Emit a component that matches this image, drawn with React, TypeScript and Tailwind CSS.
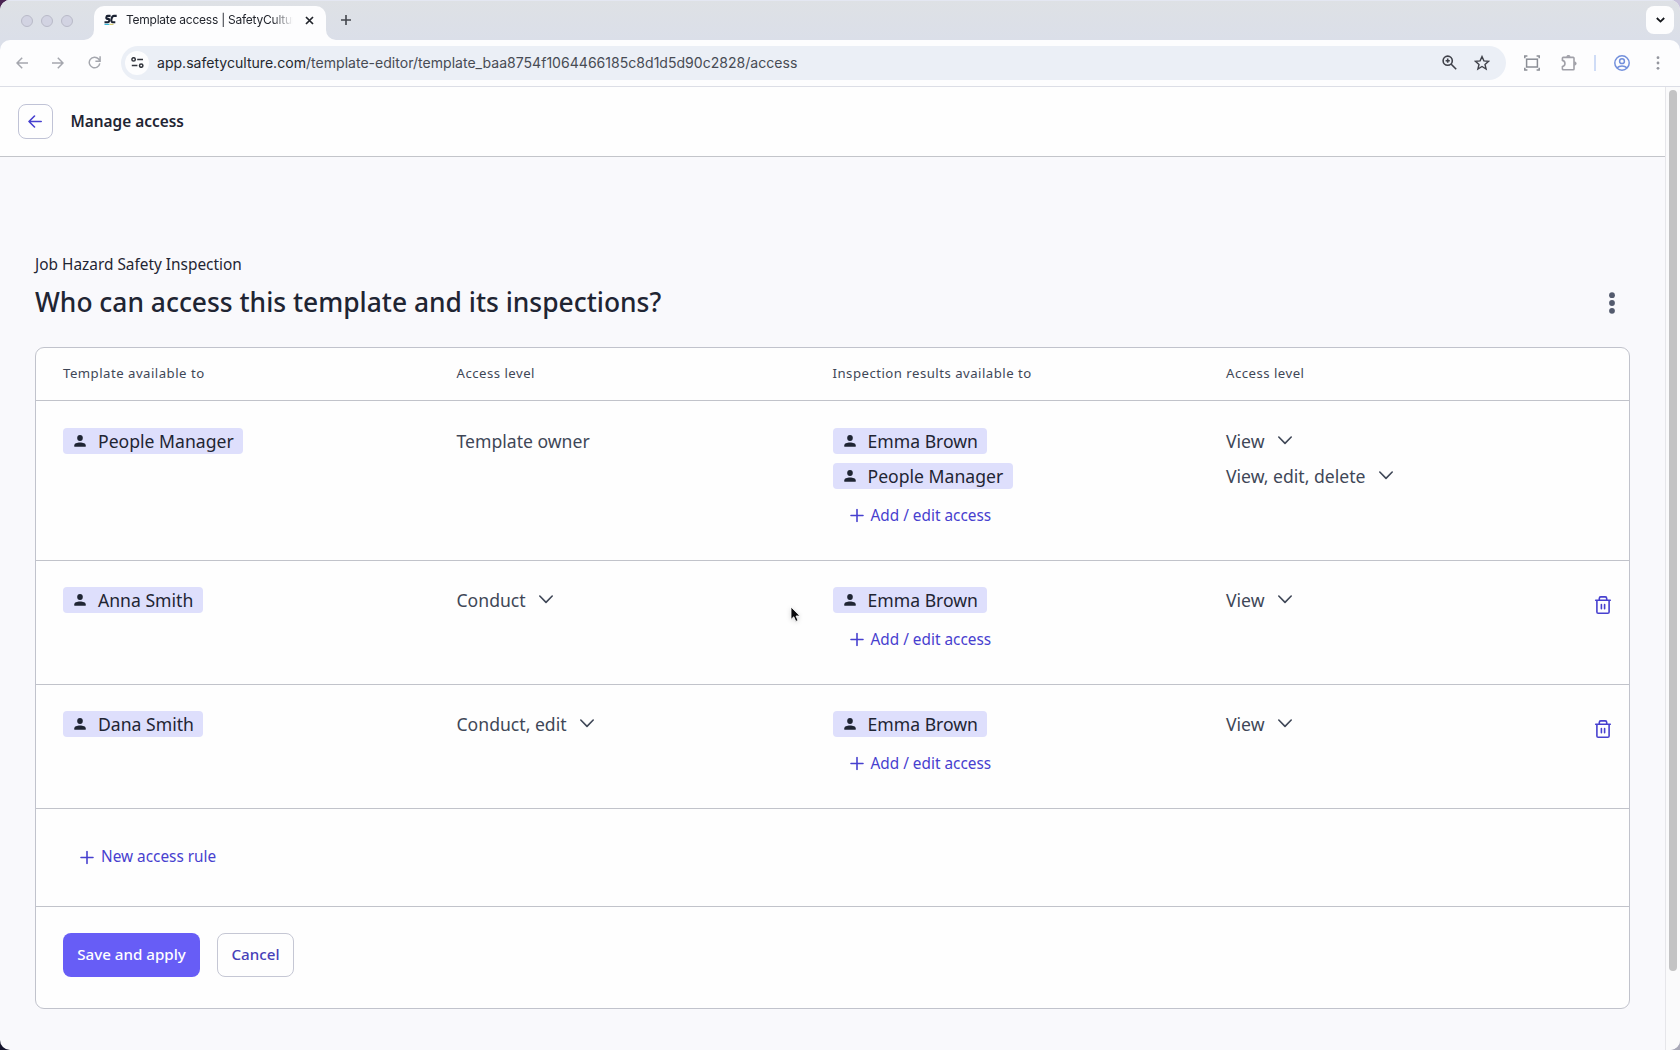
import React from 'react';

type Grant = { name: string; level: string };
type Rule = {
  name: string;
  level: string;
  owner?: boolean;
  results: Grant[];
};

const rules: Rule[] = [
  {
    name: 'People Manager',
    level: 'Template owner',
    owner: true,
    results: [
      { name: 'Emma Brown', level: 'View' },
      { name: 'People Manager', level: 'View, edit, delete' },
    ],
  },
  { name: 'Anna Smith', level: 'Conduct', results: [{ name: 'Emma Brown', level: 'View' }] },
  { name: 'Dana Smith', level: 'Conduct, edit', results: [{ name: 'Emma Brown', level: 'View' }] },
];

function Chip({ name }: { name: string }) {
  return (
    <div className="flex h-[26px] w-fit items-center rounded-[4px] bg-[#dedffc] pr-[9.5px] pl-[11px] text-[17.6px] text-[#1f2533]">
      <svg className="mr-3 size-3" viewBox="0 0 12 12" fill="currentColor">
        <ellipse cx="6" cy="3" rx="2.8" ry="3" />
        <path d="M0.3 11.8V10.2C0.3 8.4 2.9 7.4 6 7.4s5.7 1 5.7 2.8v1.6z" />
      </svg>
      <span className="whitespace-nowrap">{name}</span>
    </div>
  );
}

function Level({ label, menu = true }: { label: string; menu?: boolean }) {
  return (
    <div className="flex h-[26px] items-center text-[17.6px] text-[#3f4757]">
      <span className="whitespace-nowrap">{label}</span>
      {menu && (
        <svg className="ml-[12.5px] h-[9px] w-4 -translate-y-px" viewBox="0 0 16 9" fill="none" stroke="currentColor" strokeWidth="1.6" strokeLinecap="round" strokeLinejoin="round">
          <path d="M1.8 1L8 7.4L14.2 1" />
        </svg>
      )}
    </div>
  );
}

function AddLink({ label }: { label: string }) {
  return (
    <div className="flex items-center pl-[17px] text-[15.35px] font-[450] text-[#4740cf]">
      <svg className="mr-[7px] size-[14px] translate-y-[0.5px]" viewBox="0 0 14 14" fill="none" stroke="currentColor" strokeWidth="1.6" strokeLinecap="round">
        <path d="M7 1v12M1 7h12" />
      </svg>
      <span className="whitespace-nowrap">{label}</span>
    </div>
  );
}

function Trash() {
  return (
    <svg className="mt-[8px] h-[20px] w-[18px] text-[#4740cf]" viewBox="0 0 18 20" fill="none" stroke="currentColor" strokeWidth="1.6" strokeLinecap="round" strokeLinejoin="round">
      <path d="M1.7 5.2h14.6M5.3 5V3.4c0-.9.6-1.5 1.5-1.5h4.4c.9 0 1.5.6 1.5 1.5V5M2.9 5.2v11.7c0 .8.5 1.3 1.3 1.3h9.6c.8 0 1.3-.5 1.3-1.3V5.2M7.4 9.6v4.2M10.6 9.6v4.2" />
    </svg>
  );
}

const cols = 'grid grid-cols-[393.5px_376px_393.5px_1fr]';

function BrowserBar() {
  return (
    <div className="shrink-0 font-['Inter',sans-serif]">
      <div className="h-10 bg-linear-to-b from-[#dee1e5] to-[#dbdfe9]">
        <div className="flex h-10 border-t border-[#e4e7f2]">
          <div className="flex items-center gap-2 pr-[20px] pl-[21px]">
            {[0, 1, 2].map((i) => (
              <span key={i} className="size-3 rounded-full border border-[#b9bac8] bg-[#d2d3e2]" />
            ))}
          </div>
          <svg className="mt-[29px] -ml-[9px] size-[10px] shrink-0" viewBox="0 0 10 10" fill="#fdfdfe">
            <path d="M10 0v10H0A10 10 0 0 0 10 0z" />
          </svg>
          <div className="mt-[5px] flex h-[34px] w-[232px] items-center rounded-t-[10px] bg-[#fdfdfe] pb-[6px] pl-[10px]">
            <svg className="h-[12px] w-[13px]" viewBox="0 0 13 12">
              <g fill="none" strokeWidth="2.1" stroke="#1b2233">
                <path d="M6.6 1.9H3.7C2.2 1.9 1.7 4.8 3.4 4.9h.8C6 5 5.5 8.3 3.6 8.3H.5" />
                <path d="M12.7 1.9H10C7.5 1.9 6.2 8.3 8.6 8.3h2.7" />
              </g>
              <path d="M.5 10.4h5" stroke="#38b6d8" strokeWidth="1.2" />
              <path d="M5.5 10.4h4" stroke="#d9cf7a" strokeWidth="1.2" />
            </svg>
            <span className="ml-[9px] w-[167px] overflow-hidden text-[12px] tracking-[-0.02em] whitespace-nowrap text-[#23262e] [mask-image:linear-gradient(to_right,black_146px,transparent_167px)]">
              Template access | SafetyCulture
            </span>
            <svg className="ml-[12px] size-[9px]" viewBox="0 0 9 9" stroke="#22252b" strokeWidth="1.7" fill="none">
              <path d="M1 1l7 7M8 1l-7 7" />
            </svg>
          </div>
          <svg className="mt-[29px] size-[10px] shrink-0" viewBox="0 0 10 10" fill="#fdfdfe">
            <path d="M0 0v10h10A10 10 0 0 1 0 0z" />
          </svg>
          <svg className="mt-[14px] ml-[5px] size-[10px]" viewBox="0 0 10 10" stroke="#43464d" strokeWidth="1.6" fill="none">
            <path d="M5 0v10M0 5h10" />
          </svg>
          <div className="mt-[5px] mr-[6px] ml-auto flex size-7 items-center justify-center rounded-[8px] bg-[#fdfdfe]">
            <svg className="h-[6px] w-[9px]" viewBox="0 0 9 6" stroke="#15171c" strokeWidth="1.8" fill="none">
              <path d="M.8 1l3.7 3.6L8.2 1" />
            </svg>
          </div>
        </div>
      </div>
      <div className="bg-[#dbdfe9]">
        <div className="flex h-[47px] items-center rounded-t-[10px] border-b border-[#dcdee6] bg-[#fdfdfe] pb-[1px]">
          <svg className="ml-[16px] h-3 w-[12px]" viewBox="0 0 12 12" fill="none" stroke="#a5a7ae" strokeWidth="1.5">
            <path d="M12 6H1.2M6.2.8L1 6l5.2 5.2" />
          </svg>
          <svg className="ml-[24px] h-3 w-[12px]" viewBox="0 0 12 12" fill="none" stroke="#a5a7ae" strokeWidth="1.5">
            <path d="M0 6h10.8M5.8.8L11 6l-5.2 5.2" />
          </svg>
          <svg className="ml-[23.5px] size-[13px]" viewBox="0 0 13 13" fill="none" stroke="#a5a7ae" strokeWidth="1.5">
            <path d="M11.8 7.4A5.3 5.3 0 1 1 10.6 3L12 4.8M12.1.3v4.9H7.4" />
          </svg>
          <div className="ml-[20.5px] flex h-[34px] w-[1385px] items-center rounded-full bg-[#ebeff6] pl-[4px]">
            <div className="flex size-6 items-center justify-center rounded-full bg-[#fdfdfe]">
              <svg className="h-[11px] w-[13px]" viewBox="0 0 13 11" fill="none" stroke="#32353c" strokeWidth="1.5">
                <circle cx="2.6" cy="2.4" r="1.7" />
                <path d="M6.2 2.4H12" />
                <circle cx="10.2" cy="8.6" r="1.7" />
                <path d="M.8 8.6h5.6" />
              </svg>
            </div>
            <span className="ml-[8px] text-[14.07px] whitespace-nowrap text-[#474b54]">
              <span className="text-[#24272e]">app.safetyculture.com</span>
              /template-editor/template_baa8754f1064466185c8d1d5d90c2828/access
            </span>
            <svg className="mr-[17px] ml-auto size-[15px]" viewBox="0 0 15 15" fill="none" stroke="#3f4149" strokeWidth="1.6">
              <circle cx="5.7" cy="5.7" r="4.6" />
              <path d="M9 9l5.2 5.2M5.7 3.6v4.2M3.6 5.7h4.2" />
            </svg>
            <svg className="mr-[16px] size-[16px]" viewBox="0 0 16 16" fill="none" stroke="#3f4149" strokeWidth="1.4">
              <path d="M8 1.6l1.9 4.3 4.7.4-3.6 3.1 1.1 4.6L8 11.5 3.9 14 5 9.4 1.4 6.3l4.7-.4z" />
            </svg>
          </div>
          <svg className="ml-[18px] size-4" viewBox="0 0 16 16" fill="none" stroke="#8a8d95" strokeWidth="1.5">
            <rect x="2.6" y="4.2" width="10.8" height="7.8" />
            <path d="M.8 3.2V.9h2.6M12.6.9h2.6v2.3M.8 12.8v2.3h2.6M12.6 15.1h2.6v-2.3" />
          </svg>
          <svg className="ml-[21px] size-4" viewBox="0 0 16 16" fill="none" stroke="#a0a0a8" strokeWidth="1.6" strokeLinejoin="round">
            <path d="M1.4 5.4V3.2c0-.5.3-.8.8-.8H12.2c.5 0 .8.3.8.8V14c0 .5-.3.8-.8.8H2.2c-.5 0-.8-.3-.8-.8v-2.4c3.4-.8 3.4-5.4 0-6.2z" />
            <path d="M5.7 1.8a1.7 1.7 0 0 1 3.4 0zM13.6 6.8a1.7 1.7 0 0 1 0 3.4z" fill="#a0a0a8" strokeWidth=".6" />
          </svg>
          <span className="ml-[17px] h-4 w-[2px] bg-[#cfdcf6]" />
          <svg className="ml-[17.5px] size-4 shrink-0" viewBox="0 0 16 16" fill="none" stroke="#7390dc" strokeWidth="1.5">
            <circle cx="8" cy="8" r="7.2" />
            <circle cx="8" cy="6.2" r="2.4" />
            <path d="M3 12.9c2.6-2.6 7.4-2.6 10 0" />
          </svg>
          <svg className="ml-[26px] h-[14px] w-1" viewBox="0 0 4 14" fill="#94969e">
            <circle cx="2" cy="1.7" r="1.4" />
            <circle cx="2" cy="7" r="1.4" />
            <circle cx="2" cy="12.3" r="1.4" />
          </svg>
        </div>
      </div>
    </div>
  );
}

export default function App() {
  return (
    <div className="h-[1050px] w-[1680px] bg-linear-to-br from-[#4a2352] via-[#c9c3dd] to-[#a9a9b8]">
      <div className="h-full bg-[linear-gradient(to_top_right,#14142c_0_20px,transparent_20px)]">
        <div className="relative flex h-full flex-col overflow-hidden rounded-[10px] bg-[#f9f9fc] font-['Noto_Sans',sans-serif]">
          <BrowserBar />
          <div className="flex min-h-0 flex-1">
            <main className="flex min-w-0 flex-1 flex-col">
              <header className="flex h-[70px] shrink-0 items-center border-b border-[#c3c5ca] bg-[#fefefe] pl-[18px]">
                <button className="flex size-[35px] items-center justify-center rounded-[8px] border border-[#c0c3d6] pr-[1px] text-[#4740cf]">
                  <svg className="h-[13px] w-[14px]" viewBox="0 0 14 13" fill="none" stroke="currentColor" strokeWidth="1.6" strokeLinecap="round" strokeLinejoin="round">
                    <path d="M13.2 6.5H1M6.5 1L1 6.5L6.5 12" />
                  </svg>
                </button>
                <h1 className="ml-[17.5px] text-[15.4px] font-semibold text-[#1f2533]">Manage access</h1>
              </header>
              <div className="flex flex-col px-[35px]">
                <p className="mt-[97px] text-[15.4px] leading-[22px] text-[#1f2533]">Job Hazard Safety Inspection</p>
                <div className="mt-[10px] flex h-[34px] items-center justify-between pr-[14.5px]">
                  <h2 className="text-[26.4px] font-medium text-[#1f2533]">Who can access this template and its inspections?</h2>
                  <svg className="-mt-[1px] h-6 w-2" viewBox="0 0 8 24" fill="#545b6e">
                    <circle cx="4" cy="4.2" r="2.9" />
                    <circle cx="4" cy="12" r="2.9" />
                    <circle cx="4" cy="19.8" r="2.9" />
                  </svg>
                </div>
                <section className="mt-[27px] flex flex-col rounded-[9px] border border-[#c1c3cc] bg-[#fefefe]">
                  <div className={`${cols} h-[53px] items-center border-b border-[#c1c3ca] pb-[1px] pl-[27px] text-[13.2px] tracking-[0.48px] text-[#3f4757]`}>
                    <span>Template available to</span>
                    <span>Access level</span>
                    <span>Inspection results available to</span>
                    <span>Access level</span>
                  </div>
                  {rules.map((r) => (
                    <div key={r.name} className={`${cols} border-b border-[#c1c3ca] pl-[27px] ${r.owner ? 'h-[160px] pt-[27px]' : 'h-[124px] pt-[26px]'}`}>
                      <Chip name={r.name} />
                      <Level label={r.level} menu={!r.owner} />
                      <div>
                        <div className="flex flex-col gap-[9px]">
                          {r.results.map((g) => (
                            <Chip key={g.name} name={g.name} />
                          ))}
                        </div>
                        <div className="mt-[9px] flex h-[35px] items-center">
                          <AddLink label="Add / edit access" />
                        </div>
                      </div>
                      <div className="flex justify-between pr-[17px]">
                        <div className="flex flex-col gap-[9px]">
                          {r.results.map((g) => (
                            <Level key={g.name} label={g.level} />
                          ))}
                        </div>
                        {!r.owner && <Trash />}
                      </div>
                    </div>
                  ))}
                  <div className="flex h-[98px] items-center border-b border-[#c1c3ca] pb-[1.5px] pl-[27px]">
                    <AddLink label="New access rule" />
                  </div>
                  <div className="flex gap-[17px] pt-[26px] pb-[31px] pl-[27px] text-[15.15px] font-medium">
                    <button className="flex h-11 w-[137px] items-center justify-center rounded-[8px] bg-[#675df6] pb-[1px] text-white">Save and apply</button>
                    <button className="flex h-11 w-[77px] items-center justify-center rounded-[8px] border border-[#c5c7d4] pb-[1px] text-[#4740b8]">Cancel</button>
                  </div>
                </section>
              </div>
            </main>
            <aside className="w-[15px] border-l border-[#e6e6ea] bg-[#fafafb] pt-[3px] pl-[3px]">
              <div className="h-[881px] w-2 rounded-full bg-[#c3c3c4]" />
            </aside>
          </div>
          <svg className="absolute top-[606px] left-[790px] h-[18px] w-[12px] drop-shadow-sm" viewBox="0 0 12 18">
            <path d="M1 1v12.4l2.8-2.6 2 4.6 2.2-.9-2-4.5h3.9z" fill="#0b0b0e" stroke="#fff" strokeWidth=".8" />
          </svg>
        </div>
      </div>
    </div>
  );
}
